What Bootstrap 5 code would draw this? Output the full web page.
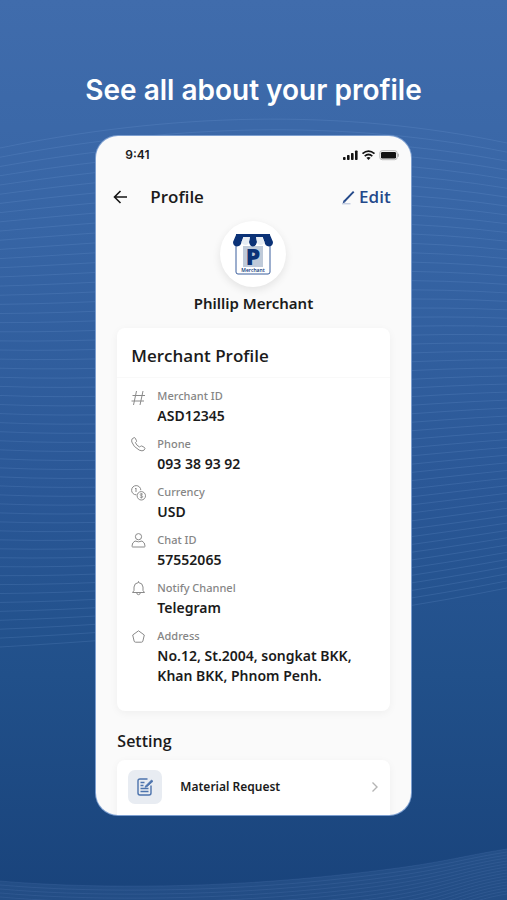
<!DOCTYPE html>
<html lang="en">
<head>
<meta charset="utf-8">
<meta name="viewport" content="width=device-width, initial-scale=1">
<title>Profile</title>
<link href="https://cdn.jsdelivr.net/npm/bootstrap@5.3.0/dist/css/bootstrap.min.css" rel="stylesheet">
<style>
body{font-family:"Noto Sans","Open Sans",sans-serif;color:#1b1b1b;background:#1a447c}
.page{background:linear-gradient(#406cac 0,#3765a5 25%,#2a5796 55%,#21508a 75%,#19437b 100%);isolation:isolate}
.waves{z-index:-1}
.headline{font:600 28px/40px Inter,sans-serif;color:#fff;padding-top:70px;margin-bottom:26px}
.phone{width:62%;min-width:300px;background:#fafafa;border-radius:22px;box-shadow:0 0 0 1px #7d9fd0;padding-top:9px}
.statusbar{font:600 12px/20px Inter,sans-serif;padding:0 12px 0 29px}
.toolbar{margin-top:16px;padding:0 20px 0 17px;height:32px}
.toolbar h1{font-family:"Open Sans",sans-serif;font-size:17px;line-height:24px;font-weight:600;margin-left:22px}
.plain{border:0;background:none;padding:0;color:inherit;line-height:24px}
.edit{font-family:"Open Sans",sans-serif;color:#24498a;font-size:17px;font-weight:600}
.avatar{width:66px;height:66px;margin-top:8px;box-shadow:0 3px 8px #00000018}
.person{font-size:15px;line-height:20px;font-weight:600;margin:6px 0 15px}
.inner{padding:0 21px}
.panel{border:0;border-radius:8px;box-shadow:0 2px 8px #0000000c}
.panel-head{padding:16px 14px 9px;border-bottom:1px solid #f9f9f9}
.panel h2,.setting h2{font-family:"Open Sans",sans-serif;font-size:17px;line-height:24px;font-weight:600;margin:0}
.facts{padding:8px 14px 25px;gap:8px;margin:0}
.fact{gap:11px}
.fact svg{margin-top:3px;fill:none;stroke:#8a8a8a;stroke-width:1}
.fact dt{font-size:11px;line-height:20px;font-weight:500;color:#858585}
.fact dd{font-size:14px;line-height:20px;font-weight:600;margin:0}
.setting{margin-top:18px}
.setting h2{font-size:16px;margin-bottom:7px}
.entry{padding:10px 11px 11px;color:inherit;font-size:12px;font-weight:600;border-radius:8px 8px 0 0}
.tile{width:34px;height:34px;background:#e8ecf2;border-radius:7px;margin-right:18px}
</style>
<script src="https://cdn.jsdelivr.net/npm/bootstrap@5.3.0/dist/js/bootstrap.bundle.min.js"></script>
</head>
<body>
<main class="page position-relative min-vh-100 d-flex flex-column align-items-center overflow-hidden">
<svg class="waves position-absolute top-0 start-0 w-100 h-100" viewBox="0 0 507 900" preserveAspectRatio="none" fill="none" aria-hidden="true">
<path d="M0 881C80 888 200 889 320 877S450 858 507 849V900H0Z" fill="#6690c8" fill-opacity=".14"/>
<g id="lines" stroke="#8fb4e8" stroke-opacity=".15" stroke-width="1"></g>
<g id="swell" stroke="#8fb4e8" stroke-opacity=".1" stroke-width="1"></g>
</svg>
<p class="headline text-center">See all about your profile</p>
<section class="phone overflow-hidden mb-5">
<div class="statusbar d-flex justify-content-between align-items-center">
<span>9:41</span>
<svg width="56" height="12" viewBox="0 0 56 12" aria-hidden="true"><g fill="#111"><rect y="8" width="2.6" height="3" rx=".8"/><rect x="4" y="6" width="2.6" height="5" rx=".8"/><rect x="8" y="4" width="2.6" height="7" rx=".8"/><rect x="12" y="1.500" width="2.600" height="9.500" rx=".8"/><rect x="38" y="3" width="15" height="6.500" rx="1.200"/></g><g fill="none" stroke="#111" stroke-width="1.700"><path d="M19.500 4.700q6-5.200 12 0M21.700 7.100q3.800-3.200 7.600 0"/></g><path d="M23.400 8.700q2.100-1.600 4.200 0l-2.100 2.300z" fill="#111"/><rect x="36.800" y="1.700" width="17.400" height="9" rx="2.400" fill="none" stroke="#aaa" stroke-width=".8"/><path d="M55.200 4.700v3" stroke="#999"/></svg>
</div>
<header class="toolbar d-flex align-items-center">
<button class="plain" type="button" aria-label="Back"><svg class="d-block" width="15" height="16" viewBox="0 0 15 16" fill="none" stroke="#151515" stroke-width="1.600"><path d="M14 8H1.500M7.500 2L1.500 8l6 6"/></svg></button>
<h1 class="mb-0 me-auto">Profile</h1>
<button class="plain edit d-flex align-items-center gap-1" type="button"><svg width="14" height="15" viewBox="0 0 14 15" fill="none"><path d="M3.200 11.500L12.700 1.700" stroke="#24498a" stroke-width="1.900"/><path d="M1.700 13.200l.8-2.700 1.800 1.700z" fill="#24498a"/><path d="M1 13.800h8.500" stroke="#aebbd6"/></svg>Edit</button>
</header>
<div class="avatar rounded-circle bg-white mx-auto d-flex align-items-center justify-content-center">
<svg width="42" height="44" viewBox="0 0 42 44" role="img" aria-label="Merchant shop"><path d="M4 13v27q0 2 2 2h30q2 0 2-2V13" fill="#fff" stroke="#3a5e9d"/><rect x="11" y="14" width="20" height="21" fill="#bfcad9"/><path d="M4 2h34v3H4z" fill="#0b3277"/><path d="M4 3L1 10q0 4 4 4.500 4-.5 4.500-4.500L12 3zM18 3l-1 7q1 4.500 4 4.500t4-4.500l-1-7zM30 3l2.500 7q.5 4 4.500 4.500 4-.5 4-4.500l-3-7z" fill="#0b3277"/><path d="M12 5l-2.500 5q1 3 4 3t3.500-3l1-5zM24 5l1 5q.5 3 3.500 3t4-3L30 5z" fill="#e7edf4"/><text x="21" y="33" text-anchor="middle" font-family="Open Sans, sans-serif" font-weight="800" font-size="23" fill="#0b3277">P</text><text x="21" y="40" text-anchor="middle" font-family="Open Sans, sans-serif" font-weight="600" font-size="5" fill="#0b3277">Merchant</text></svg>
</div>
<p class="person text-center">Phillip Merchant</p>
<div class="inner">
<article class="card panel">
<div class="panel-head"><h2>Merchant Profile</h2></div>
<dl class="facts d-flex flex-column">
<div class="fact d-flex"><svg width="15" height="18" viewBox="0 0 15 18"><path d="M5.500 2L2.500 16M12 2L9 16M1.500 6.500H14M.5 12H13"/></svg><div><dt>Merchant ID</dt><dd>ASD12345</dd></div></div>
<div class="fact d-flex"><svg width="15" height="15" viewBox="0 0 15 15"><path d="M1.200 1.800L3 .7q.8-.4 1.200.4L5.500 3.700q.3.700-.3 1.200l-.8.700q1.200 3 4.300 4.500l.9-.9q.5-.5 1.200-.2l2.700 1.500q.8.500.4 1.200l-1 1.600q-1.500 1.200-4.700-.2Q2.200 9.700.8 5 .4 2.800 1.200 1.800z"/></svg><div><dt>Phone</dt><dd>093 38 93 92</dd></div></div>
<div class="fact d-flex"><svg width="15" height="16" viewBox="0 0 15 16"><path d="M5.400 9.800A4.600 4.600 0 1 1 9.800 5.200M5 3v4M4 4l1-1"/><circle cx="10.300" cy="10.800" r="4.200"/><path d="M12 9.200q-3-1-3 .3 0 .9 1.500 1.200t1.400 1.200q-.3 1.200-3 .3M10.400 8v5.600" stroke-width=".8"/></svg><div><dt>Currency</dt><dd>USD</dd></div></div>
<div class="fact d-flex"><svg width="15" height="15" viewBox="0 0 15 15"><circle cx="7.500" cy="3.700" r="3.100"/><path d="M1.500 14q-.5 0-.5-1Q1 9.500 4 8q3.500 1.700 7 0 3 1.500 3 5 0 1-.5 1z"/></svg><div><dt>Chat ID</dt><dd>57552065</dd></div></div>
<div class="fact d-flex"><svg width="15" height="15" viewBox="0 0 15 15"><path d="M1.500 11.500L3 9.500V6q.3-4 4.500-4.500Q11.700 2 12 6v3.500l1.500 2zM5.700 11.800q.2 1.900 1.800 1.900t1.800-1.900M7.500.2v1.300"/></svg><div><dt>Notify Channel</dt><dd>Telegram</dd></div></div>
<div class="fact d-flex"><svg class="flex-shrink-0" width="15" height="15" viewBox="0 0 15 15"><path d="M7.500 1.800L13.300 6l-1.400 6q-.3 1.200-1.400 1.200h-6Q3.400 13.200 3.100 12L1.700 6z" stroke-linejoin="round"/></svg><div><dt>Address</dt><dd>No.12, St.2004, songkat BKK, Khan BKK, Phnom Penh.</dd></div></div>
</dl>
</article>
<div class="setting">
<h2>Setting</h2>
<a href="#" class="card panel entry d-flex flex-row align-items-center text-decoration-none">
<span class="tile d-flex align-items-center justify-content-center"><svg width="18" height="20" viewBox="0 0 18 20" fill="none" stroke="#4c73ad" stroke-width="1.400"><path d="M11.500 2H4Q2 2 2 4v12q0 2 2 2h9q2 0 2-2V8.500" /><path d="M4.500 5.500h4M4.500 8.500h3M4.500 11.500h8M4.500 14.500h8"/><path d="M9.500 9l6-6 1.500 1.300-6 5.400-2 .6z" fill="#4c73ad" stroke-width=".8"/></svg></span>
<span class="me-auto">Material Request</span>
<svg width="8" height="12" viewBox="0 0 8 12" fill="none" stroke="#b4b4b4" stroke-width="1.400"><path d="M1.500 1.500L6 6l-4.500 4.500"/></svg>
</a>
</div>
</div>
</section>
</main>
<script>
// Interpolate between top, middle and bottom values with a parabola.
const blend = (a, m, b, t) => a * (1 - t) * (1 - 2 * t) + 4 * m * t * (1 - t) + b * t * (2 * t - 1);
const draw = (id, paths) => {
  document.getElementById(id).innerHTML = paths.map(d => `<path d="${d}"/>`).join('');
};
draw('lines', Array.from({length: 56}, (_, i) => {
  const t = i / 55;
  const left = blend(148, 400, 647, t), right = blend(143, 380, 588, t);
  const first = left + blend(-35, 7, -10, t), second = right - blend(35, -3, -34, t);
  return `M0 ${left}C170 ${first} 340 ${second} 507 ${right}`;
}));
draw('swell', Array.from({length: 16}, (_, i) =>
  `M0 ${881 + i * 4}C80 ${888 + i * 4} 200 ${889 + i * 4} 320 ${877 + i * 4}S450 ${858 + i * 3} 507 ${849 + i * 3}`));
</script>
</body>
</html>
